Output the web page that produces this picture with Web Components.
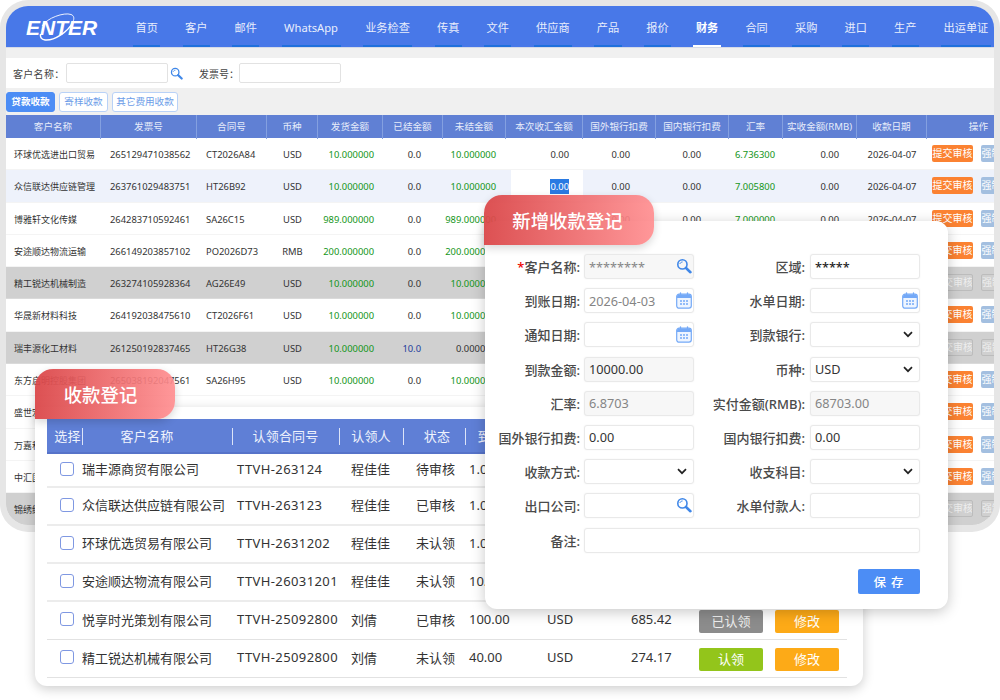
<!DOCTYPE html>
<html lang="zh">
<head>
<meta charset="utf-8">
<title>收款登记</title>
<style>
  html, body { margin: 0; background: #fff; }
  body { font-family: "Noto Sans", "Noto Sans CJK SC", sans-serif; color: #333; }
  #stage { position: relative; width: 1000px; height: 700px; overflow: hidden; }
</style>
</head>
<body>
<div id="stage">
  <app-window>
    <top-nav active="财务"></top-nav>
    <search-bar></search-bar>
    <tab-strip></tab-strip>
    <fund-table></fund-table>
  </app-window>

  <claim-card></claim-card>

  <form-card>
    <form-field label="客户名称" required muted grey icon="search">********</form-field>
    <form-field label="区域" strong>*****</form-field>
    <form-field label="到账日期" icon="calendar" grey>2026-04-03</form-field>
    <form-field label="水单日期" icon="calendar"></form-field>
    <form-field label="通知日期" icon="calendar"></form-field>
    <form-field label="到款银行" icon="chevron"></form-field>
    <form-field label="到款金额" muted>10000.00</form-field>
    <form-field label="币种" icon="chevron">USD</form-field>
    <form-field label="汇率" muted grey>6.8703</form-field>
    <form-field label="实付金额(RMB)" muted grey>68703.00</form-field>
    <form-field label="国外银行扣费">0.00</form-field>
    <form-field label="国内银行扣费">0.00</form-field>
    <form-field label="收款方式" icon="chevron"></form-field>
    <form-field label="收支科目" icon="chevron"></form-field>
    <form-field label="出口公司" icon="search"></form-field>
    <form-field label="水单付款人"></form-field>
    <form-field label="备注" wide></form-field>
  </form-card>
</div>

<script>
const searchIcon = (size, color) => `
  <svg width="${size}" height="${size}" viewBox="0 0 16 16" fill="none">
    <circle cx="6.4" cy="6.4" r="4.6" stroke="${color}" stroke-width="1.6"/>
    <path d="M4 5.6c.4-1 1.1-1.5 2.2-1.6" stroke="${color}" stroke-width="1" stroke-linecap="round"/>
    <path d="M10 10l4.4 4.2" stroke="${color}" stroke-width="2.6" stroke-linecap="round"/>
  </svg>`;

const calendarIcon = `
  <svg width="16" height="17" viewBox="0 0 16 17" fill="none">
    <rect x=".7" y="2.2" width="14.6" height="14" rx="2.4" fill="#eef5ff" stroke="#74a9f7" stroke-width="1.2"/>
    <path d="M1 6h14V4.4A2 2 0 0 0 13 2.6H3A2 2 0 0 0 1 4.4z" fill="#74a9f7"/>
    <path d="M4.500 .8v3M11.500 .8v3" stroke="#74a9f7" stroke-width="1.3" stroke-linecap="round"/>
    <path d="M4 9h2M7 9h2M10 9h2M4 12h2M7 12h2M10 12h2" stroke="#74a9f7" stroke-width="1.4"/>
  </svg>`;

const chevronIcon = `
  <svg width="10" height="7" viewBox="0 0 10 7" fill="none">
    <path d="M1 1.2l4 4 4-4" stroke="#222" stroke-width="1.7"/>
  </svg>`;

class AppWindow extends HTMLElement {
  constructor() {
    super();
    this.attachShadow({ mode: 'open' }).innerHTML = `
      <style>
        :host {
          display: block;
          width: 1000px;
          height: 532px;
          box-sizing: border-box;
          border: 6px solid #e6e6e6;
          border-bottom-width: 7px;
          border-radius: 28px;
          background: #f0f0f0;
          overflow: hidden;
        }
      </style>
      <slot></slot>`;
  }
}

class TopNav extends HTMLElement {
  constructor() {
    super();
    const items = ['首页', '客户', '邮件', 'WhatsApp', '业务检查', '传真', '文件', '供应商', '产品', '报价', '财务', '合同', '采购', '进口', '生产', '出运单证'];
    const active = this.getAttribute('active');
    this.attachShadow({ mode: 'open' }).innerHTML = `
      <style>
        :host {
          display: flex;
          height: 41px;
          background: #4878e8;
          box-shadow: 0 1px 0 #d5dbe8;
          font-size: 11.2px;
          color: #e8eefc;
        }
        .logo {
          position: relative;
          width: 127px;
          flex: none;
        }
        .logo span {
          position: absolute;
          left: 20px;
          top: 11px;
          font: italic bold 21px/22px "Liberation Sans", sans-serif;
          letter-spacing: 0;
          color: #fff;
        }
        .logo svg { position: absolute; left: 28px; top: 6px; }
        nav { display: flex; gap: 22.15px; }
        a {
          display: flex;
          align-items: center;
          box-sizing: border-box;
          padding: 3px 2.500px 0;
          white-space: nowrap;
          border-bottom: 2px solid #1f70dc;
        }
        a.on {
          font-weight: 700;
          color: #fff;
          border-bottom-color: #fff;
        }
      </style>
      <div class="logo">
        <span>ENTER</span>
        <svg width="50" height="32" viewBox="0 0 50 32" fill="none">
          <path d="M8 14C13 6 30 0 37 2.500c3 1 3.500 4 2 7" stroke="#fff" stroke-width=".9"/>
          <path d="M39 10C34 20 20 29 11 28c-4-.5-5-3-4.500-6" stroke="#fff" stroke-width="1.500"/>
        </svg>
      </div>
      <nav>${items.map(t => `<a class="${t === active ? 'on' : ''}">${t}</a>`).join('')}</nav>`;
  }
}

class SearchBar extends HTMLElement {
  constructor() {
    super();
    this.attachShadow({ mode: 'open' }).innerHTML = `
      <style>
        :host {
          display: flex;
          align-items: center;
          height: 30px;
          margin-top: 11px;
          padding-left: 7px;
          background: #fff;
          font-size: 10px;
          color: #444;
        }
        .box {
          width: 102px;
          height: 20px;
          box-sizing: border-box;
          border: 1px solid #e2e2e2;
          border-radius: 2px;
        }
        span { white-space: nowrap; }
        .lab1 { width: 53px; letter-spacing: .3px; }
        .lab2 { width: 40px; margin-left: 16px; }
        svg { margin-left: 2px; }
      </style>
      <span class="lab1">客户名称：</span>
      <div class="box"></div>
      ${searchIcon(13, '#3f87e8')}
      <span class="lab2">发票号：</span>
      <div class="box"></div>`;
  }
}

class TabStrip extends HTMLElement {
  constructor() {
    super();
    this.attachShadow({ mode: 'open' }).innerHTML = `
      <style>
        :host {
          display: flex;
          gap: 4px;
          height: 27px;
          padding-top: 4px;
          box-sizing: border-box;
          font-size: 9.600px;
        }
        div {
          width: 49px;
          height: 20px;
          box-sizing: border-box;
          line-height: 18px;
          text-align: center;
          white-space: nowrap;
          border: 1px solid #b9d2f7;
          border-radius: 3px;
          background: #fff;
          color: #6c9de8;
        }
        .on { background: #4c8df5; border-color: #4c8df5; color: #fff; font-weight: 700; }
        .long { width: 66px; }
      </style>
      <div class="on">贷款收款</div>
      <div>寄样收款</div>
      <div class="long">其它费用收款</div>`;
  }
}

const fundCols = [
  { t: '客户名称', w: 95, a: 'left', p: 8 },
  { t: '发票号', w: 96, a: 'left', p: 9 },
  { t: '合同号', w: 70, a: 'left', p: 9 },
  { t: '币种', w: 51, a: 'center', p: 0 },
  { t: '发货金额', w: 65, a: 'right', p: 9 },
  { t: '已结金额', w: 60, a: 'right', p: 22 },
  { t: '未结金额', w: 63, a: 'right', p: 10 },
  { t: '本次收汇金额', w: 77, a: 'right', p: 14 },
  { t: '国外银行扣费', w: 73, a: 'right', p: 26 },
  { t: '国内银行扣费', w: 73, a: 'right', p: 28 },
  { t: '汇率', w: 54, a: 'right', p: 8 },
  { t: '实收金额(RMB)', w: 74, a: 'right', p: 18 },
  { t: '收款日期', w: 70, a: 'center', p: 0 },
  { t: '操作', w: 67, a: 'right', p: 6 }
];

// name, invoice, contract, currency, shipped, settled, open, rate, grey row
const fundRows = [
  ['环球优选进出口贸易', '265129471038562', 'CT2026A84', 'USD', '10.000000', '0.0', '10.000000', '6.736300'],
  ['众信联达供应链管理', '263761029483751', 'HT26B92', 'USD', '10.000000', '0.0', '10.000000', '7.005800'],
  ['博雅轩文化传媒', '264283710592461', 'SA26C15', 'USD', '989.000000', '0.0', '989.000000', '7.000000'],
  ['安途顺达物流运输', '266149203857102', 'PO2026D73', 'RMB', '200.000000', '0.0', '200.000000', '1.000000'],
  ['精工锐达机械制造', '263274105928364', 'AG26E49', 'USD', '10.000000', '0.0', '10.000000', '7.000000', 1],
  ['华晟新材料科技', '264192038475610', 'CT2026F61', 'USD', '10.000000', '0.0', '10.000000', '7.000000'],
  ['瑞丰源化工材料', '261250192837465', 'HT26G38', 'USD', '10.000000', '10.0', '0.000000', '7.000000', 1],
  ['东方启明控股集团', '265038192047561', 'SA26H95', 'USD', '10.000000', '0.0', '10.000000', '7.000000'],
  ['盛世宏图实业', '262847105938261', 'CT2026J17', 'USD', '10.000000', '0.0', '10.000000', '7.000000'],
  ['万嘉科技发展', '263918204756120', 'HT26K52', 'USD', '10.000000', '0.0', '10.000000', '7.000000'],
  ['中汇国际物流', '264710392856104', 'SA26L08', 'USD', '10.000000', '0.0', '10.000000', '7.000000'],
  ['锦绣纺织服饰', '261937482051736', 'AG26M33', 'USD', '10.000000', '0.0', '10.000000', '7.000000', 1]
];

class FundTable extends HTMLElement {
  constructor() {
    super();
    const cell = (i, html, extra = '') => {
      const c = fundCols[i];
      return `<div class="c ${extra}" style="text-align:${c.a};padding-${c.a === 'right' ? 'right' : 'left'}:${c.p}px">${html}</div>`;
    };
    const rows = fundRows.map((r, n) => {
      const grey = r[8];
      const zero = n === 1 ? '<span class="sel">0.00</span>' : '0.00';
      return `<div class="row ${grey ? 'grey' : ''} ${n === 1 ? 'hover' : ''}">
        ${cell(0, r[0], 'name')}${cell(1, r[1])}${cell(2, r[2])}${cell(3, r[3])}
        ${cell(4, r[4], 'green')}${cell(5, r[5], r[5] === '10.0' ? 'blue' : '')}
        ${cell(6, r[6], r[6].startsWith('0') ? '' : 'green')}
        ${cell(7, zero, n === 1 ? 'edit' : '')}${cell(8, '0.00')}${cell(9, '0.00')}
        ${cell(10, r[7], 'green')}${cell(11, '0.00')}${cell(12, '2026-04-07')}
        <div class="c ops"><button class="a">提交审核</button><button class="b">强制审核</button></div>
      </div>`;
    }).join('');
    this.attachShadow({ mode: 'open' }).innerHTML = `
      <style>
        :host {
          display: block;
          font-size: 9.4px;
          background: #fff;
          color: #333;
          --cols: ${fundCols.map(c => c.w + 'px').join(' ')};
        }
        .head, .row { display: grid; grid-template-columns: var(--cols); }
        .head {
          height: 23px;
          background: #6080d4;
          color: #e6ecfa;
          font-size: 9.6px;
          line-height: 24px;
        }
        .head div { border-right: 1px solid #84a0e0; text-align: center; box-sizing: border-box; white-space: nowrap; }
        .head div:last-child { border: 0; text-align: right; padding-right: 6px; }
        .row {
          height: 32.3px;
          box-sizing: border-box;
          border-bottom: 1px solid #f4f4f4;
        }
        .row.hover { background: #eef2fb; }
        .row.grey { background: #d0d0d0; border-color: #dadada; }
        .c { line-height: 33px; height: 31px; white-space: nowrap; overflow: hidden; box-sizing: border-box; }
        .name { font-size: 9px; letter-spacing: 0; }
        .green { color: #14961a; }
        .blue { color: #24409c; }
        .edit { background: #fff; margin-left: 5px; }
        .sel { background: #2a7ae2; color: #fff; padding: 1px 0; }
        .ops { display: flex; align-items: center; gap: 8px; padding-left: 5px; overflow: hidden; }
        button {
          flex: none;
          width: 41px;
          height: 17px;
          padding: 0;
          border: 0;
          border-radius: 2px;
          font: inherit;
          font-size: 10px;
          line-height: 17px;
          white-space: nowrap;
          overflow: hidden;
          color: #fff;
        }
        .a { background: #fb8232; }
        .b { background: #a3bfe0; }
        .grey button {
          background: #d0d0d0;
          border: 1px solid #bcbcbc;
          color: #eeeeee;
          line-height: 15px;
        }
      </style>
      <div class="head">
        ${fundCols.map(c => `<div>${c.t}</div>`).join('')}
      </div>
      ${rows}`;
  }
}

class RibbonTitle extends HTMLElement {
  constructor() {
    super();
    this.attachShadow({ mode: 'open' }).innerHTML = `
      <style>
        :host {
          position: absolute;
          display: flex;
          align-items: center;
          justify-content: center;
          box-sizing: border-box;
          border-radius: 18px 18px 18px 0;
          background: linear-gradient(90deg, rgba(218, 70, 72, .94), rgba(255, 140, 142, .9));
          box-shadow: 0 3px 8px rgba(0, 0, 0, .16);
          color: #fff;
          white-space: nowrap;
          font: 500 18.400px "Noto Sans CJK SC", sans-serif;
        }
      </style>
      <slot></slot>`;
  }
}

const claimRows = [
  ['瑞丰源商贸有限公司', 'TTVH-263124', '程佳佳', '待审核', '1.00', '6.87', '未认领', 'green'],
  ['众信联达供应链有限公司', 'TTVH-263123', '程佳佳', '已审核', '1.00', '6.87', '已认领', 'grey'],
  ['环球优选贸易有限公司', 'TTVH-2631202', '程佳佳', '未认领', '1.00', '6.87', '认领', 'green'],
  ['安途顺达物流有限公司', 'TTVH-26031201', '程佳佳', '未认领', '10.00', '68.70', '认领', 'green'],
  ['悦享时光策划有限公司', 'TTVH-25092800', '刘倩', '已审核', '100.00', '685.42', '已认领', 'grey'],
  ['精工锐达机械有限公司', 'TTVH-25092800', '刘倩', '未认领', '40.00', '274.17', '认领', 'green']
];

class ClaimCard extends HTMLElement {
  constructor() {
    super();
    const cols = '35px 150px 107px 64px 62px 78px 84px 68px 152px';
    this.attachShadow({ mode: 'open' }).innerHTML = `
      <style>
        :host {
          position: absolute;
          left: 35px;
          top: 407px;
          width: 828px;
          height: 279px;
          box-sizing: border-box;
          padding: 12px 16px 0 12px;
          background: #fff;
          border-radius: 0 0 12px 12px;
          box-shadow: 0 3px 12px rgba(0, 0, 0, .2);
          font-size: 13px;
          color: #333;
        }
        ribbon-title { left: 0; top: -38px; width: 140px; height: 50px; padding-right: 9px; }
        .head, .row { display: grid; grid-template-columns: ${cols}; align-items: center; }
        .head {
          height: 35px;
          background: #5f7fd6;
          color: #eef2fc;
          letter-spacing: .2px;
          box-shadow: inset 0 -2px 0 #5673c9;
        }
        .head div { height: 17px; line-height: 17px; text-align: center; box-shadow: 1px 0 0 #dce4f8; white-space: nowrap; }
        .head .pick { padding-left: 6px; box-sizing: border-box; }
        .head .nm { padding-right: 20px; box-sizing: border-box; }
        .head .state { padding-left: 6px; box-sizing: border-box; }
        .head div.none { box-shadow: none; }
        .row {
          height: 38px;
          box-sizing: border-box;
          padding-bottom: 3px;
          border-bottom: 2px solid #ececec;
          white-space: nowrap;
        }
        .head + .row { height: 34px; }
        .row:nth-last-child(-n+2) { border-bottom-width: 1px; border-bottom-color: #e2e2e2; }
        .box {
          width: 14px;
          height: 14px;
          margin-left: 13px;
          box-sizing: border-box;
          border: 1.500px solid #7f98e2;
          border-radius: 3px;
        }
        .id { padding-left: 5px; letter-spacing: .4px; }
        .who { padding-left: 12px; }
        .st { padding-left: 13px; }
        .amt { padding-left: 4px; }
        .ops { display: flex; gap: 12px; padding: 4px 0 0 4px; }
        .ops div {
          width: 64px;
          height: 23px;
          border-radius: 2px;
          line-height: 23px;
          text-align: center;
          color: #fff;
        }
        .green { background: #93c51b; }
        .ops .grey { background: #8c8c8c; color: #eee; }
        .edit { background: #fdaa17; }
      </style>
      <ribbon-title>收款登记</ribbon-title>
      <div class="head">
        <div class="pick">选择</div><div class="nm">客户名称</div><div>认领合同号</div><div>认领人</div><div class="state">状态</div>
        <div class="none">到款金额</div><div class="none">币种</div><div class="none">金额</div><div class="none">操作</div>
      </div>
      ${claimRows.map(r => `<div class="row">
        <div class="box"></div>
        <div class="nm">${r[0]}</div>
        <div class="id">${r[1]}</div>
        <div class="who">${r[2]}</div>
        <div class="st">${r[3]}</div>
        <div class="amt">${r[4]}</div>
        <div class="amt">USD</div>
        <div class="amt">${r[5]}</div>
        <div class="ops"><div class="${r[7]}">${r[6]}</div><div class="edit">修改</div></div>
      </div>`).join('')}`;
  }
}

class FormCard extends HTMLElement {
  constructor() {
    super();
    this.attachShadow({ mode: 'open' }).innerHTML = `
      <style>
        :host {
          position: absolute;
          left: 485px;
          top: 221px;
          width: 463px;
          height: 388px;
          box-sizing: border-box;
          padding-top: 33px;
          background: #fff;
          border-radius: 12px;
          box-shadow: 0 3px 14px rgba(0, 0, 0, .22);
        }
        ribbon-title { left: -1px; top: -26px; width: 170px; height: 50px; padding-right: 3px; }
        .grid {
          display: grid;
          grid-template-columns: 209px 226px;
          grid-auto-rows: 25px;
          row-gap: 9.200px;
        }
        .foot { display: flex; justify-content: flex-end; padding: 16px 28px 0 0; }
        button {
          width: 62px;
          height: 25px;
          padding: 0;
          border: 0;
          border-radius: 2px;
          background: #4c8df5;
          color: #fff;
          font: 500 12.500px "Noto Sans CJK SC", sans-serif;
          letter-spacing: 1px;
        }
      </style>
      <ribbon-title>新增收款登记</ribbon-title>
      <div class="grid"><slot></slot></div>
      <div class="foot"><button>保 存</button></div>`;
  }
}

class FormField extends HTMLElement {
  constructor() {
    super();
    const icon = this.getAttribute('icon');
    const glyph = icon === 'search' ? searchIcon(16, '#3f87e8')
      : icon === 'calendar' ? calendarIcon
      : icon === 'chevron' ? chevronIcon : '';
    const star = this.hasAttribute('required') ? '<i>*</i>' : '';
    this.attachShadow({ mode: 'open' }).innerHTML = `
      <style>
        :host { display: flex; align-items: center; font-size: 12.700px; --lab: 112px; }
        :host(:nth-child(odd)) { --lab: 96px; }
        :host([wide]) { grid-column: 1 / -1; }
        label {
          width: var(--lab);
          flex: none;
          box-sizing: border-box;
          padding-right: 1px;
          text-align: right;
          font: 500 13px "Noto Sans", "Noto Sans CJK SC", sans-serif;
          white-space: nowrap;
          color: #4a4a4a;
        }
        :host(:nth-child(even)) label { margin-right: 1px; }
        i { color: #e00; font-style: normal; }
        .box {
          position: relative;
          display: flex;
          align-items: center;
          width: 110px;
          height: 25px;
          margin-left: 3px;
          box-sizing: border-box;
          padding-left: 4px;
          border: 1px solid #e9e9e9;
          border-radius: 3px;
          box-shadow: 0 0 2px rgba(0, 0, 0, .06);
          background: #fff;
          color: #333;
        }
        :host([wide]) .box { width: 336px; }
        :host([muted]) .box { background: #f7f7f7; }
        :host([grey]) .box { color: #858585; }
        :host([strong]) .box { color: #222; font-weight: 500; }
        .ico { position: absolute; right: 1px; top: 3px; display: flex; }
        :host([icon="chevron"]) .ico { right: 6px; top: 8px; }
      </style>
      <label>${star}${this.getAttribute('label')}:</label>
      <div class="box"><slot></slot><span class="ico">${glyph}</span></div>`;
  }
}

window.customElements.define('app-window', AppWindow);
window.customElements.define('top-nav', TopNav);
window.customElements.define('search-bar', SearchBar);
window.customElements.define('tab-strip', TabStrip);
window.customElements.define('fund-table', FundTable);
window.customElements.define('ribbon-title', RibbonTitle);
window.customElements.define('claim-card', ClaimCard);
window.customElements.define('form-card', FormCard);
window.customElements.define('form-field', FormField);
</script>
</body>
</html>
